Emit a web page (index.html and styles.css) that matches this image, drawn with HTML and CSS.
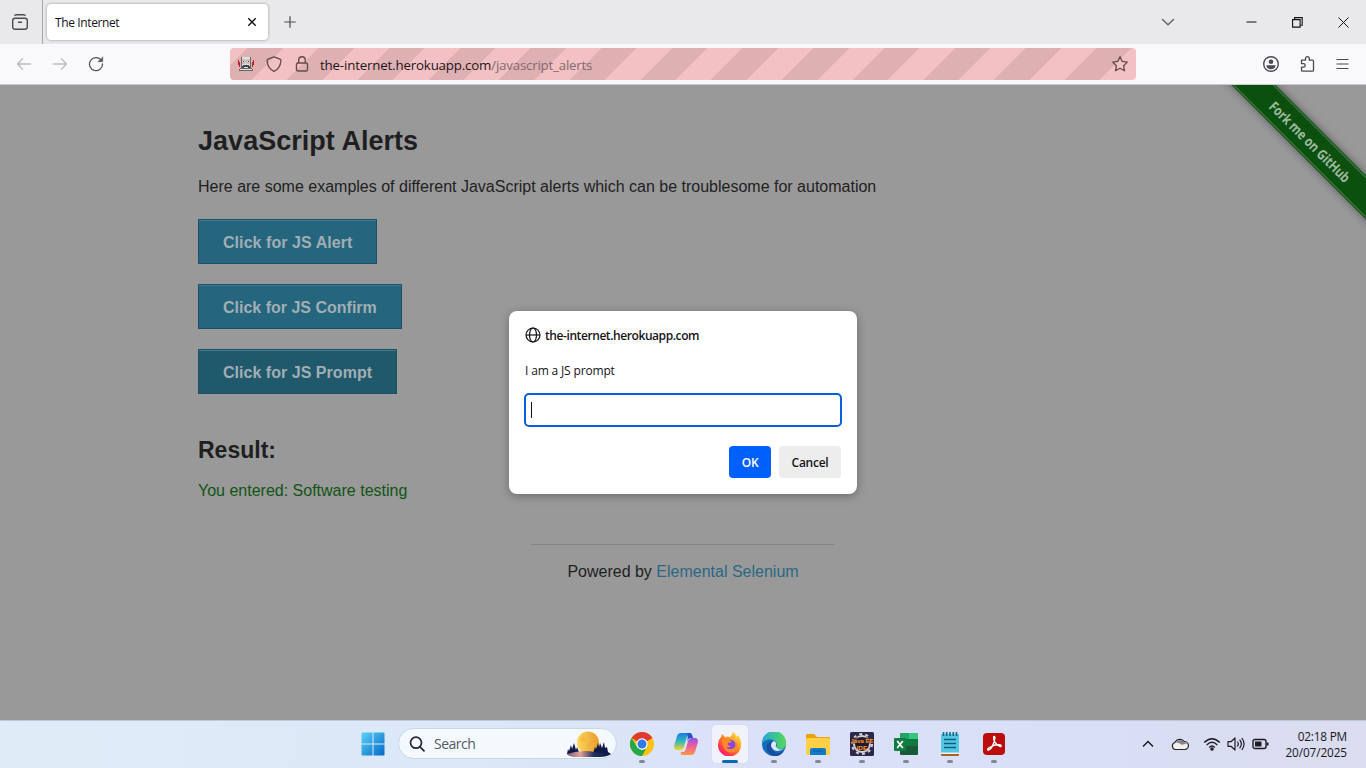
FILE: index.html
```html
<!DOCTYPE html>
<html lang="en">
<head>
<meta charset="utf-8">
<title>The Internet</title>
<link rel="stylesheet" href="styles.css">
</head>
<body>
<div class="screen">
  <header class="tabbar">
    <div class="recent"><svg width="18" height="18" viewBox="0 0 18 18" fill="none" stroke="#4a4a52" stroke-width="1.4" stroke-linecap="round"><rect x="1.7" y="5.2" width="14.6" height="11" rx="2.4"/><path d="M3.8 2.2Q4.5 1.7 5.5 1.7H12.5Q13.5 1.7 14.2 2.2M7.5 9.2h3"/></svg></div>
    <div class="tab"><span class="tab-title">The Internet</span><svg width="10" height="10" viewBox="0 0 10 10" stroke="#15141a" stroke-width="1.4"><path d="M1.3 1.3l7.4 7.4M8.7 1.3L1.3 8.7"/></svg></div>
    <svg class="plus" width="12" height="12" viewBox="0 0 12 12" stroke="#4a4a52" stroke-width="1.2"><path d="M6 .3v11.4M.3 6h11.4"/></svg>
    <div class="window-controls">
      <svg width="14" height="14" viewBox="0 0 14 14" fill="none" stroke="#5b5b66" stroke-width="1.3" stroke-linecap="round" stroke-linejoin="round"><path d="M1.5 4.5L7 9.7l5.500-5.200"/></svg>
      <svg class="minimize" width="11" height="11" viewBox="0 0 11 11" stroke="#111"><path d="M.5 5h10"/></svg>
      <svg class="restore" width="11" height="11" viewBox="0 0 11 11" fill="none" stroke="#111" stroke-width="1.1"><path d="M.6 2.600h7.500v7.500H.6zM2.600 2.500V.6h7.600v7.600H8.200"/></svg>
      <svg class="close" width="11" height="11" viewBox="0 0 11 11" stroke="#111"><path d="M.5.5l10 10M10.500.5l-10 10"/></svg>
    </div>
  </header>
  <nav class="toolbar">
    <div class="nav-buttons">
      <svg width="16" height="16" viewBox="0 0 16 16" fill="none" stroke="#bcbcc1" stroke-width="1.3" stroke-linecap="round" stroke-linejoin="round"><path d="M14.500 8H1.500M6.500 2.800L1.500 8l5 5.200"/></svg>
      <svg width="16" height="16" viewBox="0 0 16 16" fill="none" stroke="#bcbcc1" stroke-width="1.3" stroke-linecap="round" stroke-linejoin="round"><path d="M1.500 8h13M9.500 2.800l5 5.200-5 5.200"/></svg>
      <svg width="16" height="16" viewBox="0 0 16 16" fill="none" stroke="#55555d" stroke-width="1.3" stroke-linecap="round"><path d="M12.900 3.900A6.500 6.500 0 1 0 14.500 8"/><path d="M14.700 1.200v4.500h-4.500z" fill="#55555d" stroke-width=".6"/></svg>
    </div>
    <div class="urlbar">
      <svg class="robot" width="16" height="16" viewBox="0 0 16 16"><path d="M0 4h1v2h1v5H1V9H0zM15 4h1v5h-1v2h-1V6h1z" fill="#bd1e2c"/><path d="M3 1h10v11h1v1h1v2H1v-2h1v-1h1z" fill="#656a6d"/><path d="M4 1h8v11H4zM2 13h12v1H2z" fill="#dce0df"/><path d="M4 4h3v3H4zM9 4h3v3H9z" fill="#fff" stroke="#8b6f65" stroke-width=".6"/><path d="M5 5h1v1H5zM10 5h1v1h-1z" fill="#a51c1c"/><path d="M5 9h6v1h1v2h-2v-1H6v1H4v-2h1z" fill="#434547"/></svg>
      <svg class="shield" width="16" height="16" viewBox="0 0 16 16" fill="none" stroke="#634b50" stroke-width="1.3" stroke-linejoin="round"><path d="M8 .9L14 3.100q1 .4.900 1.600C14.500 9.700 12 13.500 8 15.300 4 13.500 1.500 9.700 1.100 4.700 1 3.500 1.500 3.200 2 3.100z"/></svg>
      <svg class="lock" width="14" height="16" viewBox="0 0 14 16" fill="none" stroke="#634b50" stroke-width="1.4"><rect x="1.500" y="7" width="11" height="8" rx="1.500"/><path d="M3.700 7V4a3.300 3.300 0 0 1 6.600 0v3"/></svg>
      <span class="url"><span class="host">the-internet.herokuapp.com</span><span class="path">/javascript_alerts</span></span>
      <svg class="star" width="18" height="18" viewBox="0 0 18 18" fill="none" stroke="#634b50" stroke-width="1.3" stroke-linejoin="round"><path d="M9 1.700l2.200 4.700 5.100.7-3.700 3.600.9 5.100L9 13.300l-4.500 2.500.9-5.100L1.700 7.100l5.100-.7z"/></svg>
    </div>
    <div class="tools">
      <svg width="18" height="18" viewBox="0 0 18 18" fill="#4a4a52"><circle cx="9" cy="9" r="7.300" fill="none" stroke="#4a4a52" stroke-width="1.400"/><circle cx="9" cy="6.700" r="2.300"/><path d="M4.500 10.300h9q.3 2-1.700 3.200-2.800 1.500-5.600 0-2-1.200-1.700-3.200z"/></svg>
      <svg width="16" height="18" viewBox="0 0 16 18" fill="none" stroke="#4a4a52" stroke-width="1.300" stroke-linejoin="round"><path d="M1.500 5.200h4V3.500a1.900 1.900 0 0 1 3.800 0v1.700H12.500q1 0 1 1v9q0 1-1 1H2.500q-1 0-1-1v-3.100h2a1.700 1.700 0 0 0 0-3.400H1.500z"/></svg>
      <svg width="13" height="12" viewBox="0 0 13 12" stroke="#4a4a52" stroke-width="1.200"><path d="M.5 1.500h12M.5 6h12M.5 10.500h12"/></svg>
    </div>
  </nav>
  <main class="page">
    <div class="ribbon"><span>Fork me on GitHub</span></div>
    <section class="example">
      <h3>JavaScript Alerts</h3>
      <p>Here are some examples of different JavaScript alerts which can be troublesome for automation</p>
      <ul>
        <li><button class="js-button alert">Click for JS Alert</button></li>
        <li><button class="js-button confirm">Click for JS Confirm</button></li>
        <li><button class="js-button prompt hovered">Click for JS Prompt</button></li>
      </ul>
      <h4>Result:</h4>
      <p class="result">You entered: Software testing</p>
    </section>
    <footer class="page-footer"><hr><div>Powered by <a>Elemental Selenium</a></div></footer>
    <div class="dialog">
      <div class="origin"><svg width="16" height="16" viewBox="0 0 16 16" fill="none" stroke="#15141a" stroke-width="1.200"><circle cx="8" cy="8" r="7"/><ellipse cx="8" cy="8" rx="3.500" ry="7"/><path d="M1 8h14"/></svg><span>the-internet.herokuapp.com</span></div>
      <div class="message">I am a JS prompt</div>
      <div class="field"><i class="caret"></i></div>
      <div class="actions"><button class="ok">OK</button><button class="cancel">Cancel</button></div>
    </div>
  </main>
  <footer class="taskbar">
    <div class="apps">
      <svg class="start" width="24" height="24" viewBox="0 0 24 24"><defs><linearGradient id="win" x1="0" y1="0" x2="24" y2="24" gradientUnits="userSpaceOnUse"><stop stop-color="#5fd3fa"/><stop offset="1" stop-color="#0067c5"/></linearGradient></defs><path fill="url(#win)" d="M1.500.5h10v11H.5v-10q0-1 1-1zM12.500.5h10q1 0 1 1v10h-11zM.5 12.500h11v11h-10q-1 0-1-1zM12.500 12.500h11v10q0 1-1 1h-10z"/></svg>
      <div class="search">
        <svg width="16" height="16" viewBox="0 0 16 16" fill="none" stroke="#24272d" stroke-width="1.700" stroke-linecap="round"><circle cx="7" cy="6.700" r="5.500"/><path d="M11 10.800l4 4"/></svg>
        <span>Search</span>
        <svg class="moon" width="46" height="28" viewBox="0 0 46 28"><defs><linearGradient id="moon"><stop stop-color="#ffd65a"/><stop offset="1" stop-color="#e89b2b"/></linearGradient><linearGradient id="hill"><stop stop-color="#765b76"/><stop offset=".3" stop-color="#e5a295"/><stop offset=".6" stop-color="#243263"/><stop offset="1" stop-color="#0c1743"/></linearGradient></defs><circle cx="22" cy="12.500" r="11" fill="url(#moon)"/><circle cx="17" cy="9" r="2.500" fill="#f4ba3c"/><circle cx="25" cy="15" r="3" fill="#eeb040"/><path fill="#101a48" d="M1 24l1-5 1 2 2-6 1 4 2-6 2 7 1-3 2 5 3 3zM27 23l2-6 1 2 2-6 1 4 1-4 2 5 2-6 1 6 2-1 1 5 3 2-17 2z"/><path d="M1 24Q17 19 30 22.500L45 24Q41 27 34 27H8Q2 26 1 24z" fill="url(#hill)"/></svg>
      </div>
      <div class="app chrome"><svg width="24" height="24" viewBox="0 0 24 24"><circle cx="12" cy="12" r="12" fill="#fbc116"/><path d="M12 12L1.600 6a12 12 0 0 1 20.800 0z" fill="#df3a30"/><path d="M12 24A12 12 0 0 1 1.600 6L7 15l5 3 4-1z" fill="#24a64b"/><circle cx="12" cy="12" r="5.700" fill="#fff"/><circle cx="12" cy="12" r="4.500" fill="#2f78ed"/></svg></div>
      <div class="app idle"><svg width="24" height="24" viewBox="0 0 24 24"><defs><linearGradient id="coA" x1="0" y1="0" x2="0" y2="1"><stop stop-color="#147ee8"/><stop offset=".5" stop-color="#36b8bb"/><stop offset="1" stop-color="#f6d528"/></linearGradient><linearGradient id="coB" x1="0" y1="0" x2="0" y2="1"><stop stop-color="#8e52e9"/><stop offset=".5" stop-color="#ef609b"/><stop offset="1" stop-color="#ff963c"/></linearGradient></defs><path fill="url(#coA)" d="M7 1h8q3 0 2 3h-2q-2 0-2.500 2L10 15q-1 3-4 3H3q-3 0-3-4L3 4q1-3 4-3z"/><path fill="url(#coB)" d="M17 23H9q-3 0-2-3h2q2 0 2.500-2L14 9q1-3 4-3h3q3 0 3 4l-3 10q-1 3-4 3z"/><path d="M13 1h3q2 0 3 5h-2q-3 0-4 4l1-6z" fill="#2455c5"/></svg></div>
      <div class="app active"><svg width="24" height="24" viewBox="0 0 24 24"><defs><linearGradient id="fox" x1="1" y1="0" x2=".2" y2="1"><stop stop-color="#fff14a"/><stop offset=".45" stop-color="#ff971f"/><stop offset=".8" stop-color="#ff3b4c"/><stop offset="1" stop-color="#e31587"/></linearGradient></defs><path fill="url(#fox)" d="M3 5l1-3 3 3q3-1 5 0 2-1 3-5 3 2 4 5l1-2q4 5 3 11A11.500 11.500 0 0 1 0 12q0-4 3-7z"/><circle cx="12" cy="13" r="5.500" fill="#8547df"/><path d="M4 8l7-2q-1 2 3 3-1 2-4 2-1 3 3 3-2 2-5 1 3 4 8 1 3-2 1-7 4 4 2 8-3 5-9 3-6-3-6-12z" fill="#ff8927"/></svg></div>
      <div class="app"><svg width="24" height="24" viewBox="0 0 24 24"><defs><linearGradient id="edge"><stop stop-color="#22a7dc"/><stop offset="1" stop-color="#57d955"/></linearGradient></defs><circle cx="12" cy="12" r="12" fill="#126dbd"/><path d="M0 11A12 12 0 0 1 24 11q0 6-6 6-4 0-4-2 2-2 0-5Q8 4 0 11z" fill="url(#edge)"/><path d="M9 12q-1 7 6 9 4 0 7-2-4 6-11 5Q3 20 5 13q2-4 7-4-2 1-3 3z" fill="#164f9f"/><path d="M12 9q-3 1-3 5 2 5 7 5 4 0 7-3-5 3-8 0-2-1-1-3 1-2-2-4z" fill="#e2e7fa"/></svg></div>
      <div class="app"><svg width="26" height="24" viewBox="0 0 26 24"><path d="M1 3q0-1 1-1h7l3 3h12q1 0 1 1v8H1z" fill="#e8a30d"/><rect x="1" y="6" width="24" height="17" rx="1.500" fill="#ffcf46"/><path d="M5 23v-5q0-2 2-2h12q2 0 2 2v5z" fill="#147ac8"/><path d="M8 19h10" stroke="#095a9d"/></svg></div>
      <div class="app"><svg width="24" height="24" viewBox="0 0 24 24"><rect width="24" height="24" rx="1.500" fill="#2c274c"/><circle cx="12" cy="12" r="8" fill="#211a2e" stroke="#d8d0d3" stroke-width="2"/><circle cx="12" cy="12" r="10" fill="none" stroke="#d8d0d3" stroke-width="2" stroke-dasharray="3 3.280"/><path d="M0 5.500h24v6H0z" fill="#2c1f2e" opacity=".75"/><g fill="#ff9427" font-family="Liberation Sans, sans-serif" font-size="6" font-weight="bold" text-anchor="middle"><text x="12" y="10.500" textLength="23" lengthAdjust="spacingAndGlyphs">Java EE</text><text x="12" y="17.800" textLength="11" lengthAdjust="spacingAndGlyphs">IDE</text></g></svg></div>
      <div class="app"><svg width="24" height="24" viewBox="0 0 24 24"><path fill="#20a365" d="M6 1h17q1 0 1 1v10H6z"/><path fill="#107c41" d="M6 7h9v15H6z"/><path fill="#35c481" d="M15 1h8q1 0 1 1v5h-9z"/><path fill="#185c37" d="M6 14h18v8q0 1-1 1H7q-1 0-1-1z"/><path fill="#10793e" d="M15 7h9v7h-9z"/><rect y="6" width="12" height="13" rx="1" fill="#107c41"/><path d="M3.200 9l5.600 7M8.800 9l-5.600 7" stroke="#fff" stroke-width="1.700"/></svg></div>
      <div class="app"><svg width="20" height="24" viewBox="0 0 20 24"><path d="M1 21h18v2q0 1-1 1H2q-1 0-1-1z" fill="#af5f24"/><rect x="1" y="2" width="18" height="20" rx="1" fill="#53c7e1"/><path d="M1 20.500h18V22H1z" fill="#e9f5fa"/><path d="M4 7.500h12M4 11.500h12M4 15.500h12" stroke="#075d82" stroke-width="1.300"/><path d="M3.500 0v4M6.700 0v4M10 0v4M13.300 0v4M16.500 0v4" stroke="#126887" stroke-width="1.600"/></svg></div>
      <div class="app"><svg width="22" height="22" viewBox="0 0 22 22"><rect width="22" height="22" rx="4" fill="#bb0d0b"/><path d="M5 17c-2-1 4-4 7-5 3-.6 7-.3 6 1.200-1 1.200-6-2.700-7-5.700-.7-3-.3-4 .2-4 1.300 0 .5 4-1.100 8-1 3-3.600 6-5.100 5.500z" fill="none" stroke="#fff" stroke-width="1.400"/></svg></div>
    </div>
    <div class="tray">
      <svg width="12" height="12" viewBox="0 0 12 12" fill="none" stroke="#1c1c22" stroke-width="1.500"><path d="M1 8.500l5-5 5 5"/></svg>
      <svg class="cloud" width="18" height="14" viewBox="0 0 18 14"><path d="M4.500 12.500a3.600 3.600 0 0 1-.6-7A5.300 5.300 0 0 1 13 4.500a4 4 0 0 1 .8 8z" fill="#f3f0ed" stroke="#26262a" stroke-width="1.200"/><path d="M4.500 5.500A5.200 5.200 0 0 1 13 5q2 .3 3 2Q13 6.500 11 8 8 5 4.500 5.500z" fill="#85858b"/></svg>
      <svg class="wifi" width="18" height="14" viewBox="0 0 18 14" fill="none" stroke="#1c1c22" stroke-width="1.400"><path d="M1.200 5.500Q9-2 16.800 5.500M3.700 8Q9 2.700 14.300 8M6.200 10.400Q9 7.700 11.800 10.400"/><circle cx="9" cy="12" r="1.100" fill="#1c1c22"/></svg>
      <svg class="speaker" width="18" height="14" viewBox="0 0 18 14" fill="none" stroke="#1c1c22" stroke-width="1.200" stroke-linejoin="round"><path d="M1 4.700h3L8 1v12L4 9.300H1zM10.300 4.500q2 2.500 0 5M12.600 2.700q3.500 4.300 0 8.600M14.800 1q4.500 6 0 12"/></svg>
      <svg class="battery" width="17" height="12" viewBox="0 0 17 12" fill="none" stroke="#1c1c22" stroke-width="1.400"><rect x="1" y="1.500" width="13" height="9" rx="2"/><path d="M3 3.500h6.500v5H3z" fill="#1c1c22" stroke="none"/><path d="M15.500 4.500v3" stroke-width="2"/></svg>
      <div class="clock"><span>02:18 PM</span><span class="date">20/07/2025</span></div>
    </div>
  </footer>
</div>
</body>
</html>
```
FILE: styles.css
```css
* { box-sizing: border-box; }
body { margin: 0; font-family: "Open Sans", "Noto Sans", sans-serif; }
svg { display: block; flex-shrink: 0; }
button { border: 0; margin: 0; font-family: inherit; }
.screen { width: 1366px; height: 768px; display: flex; flex-direction: column; overflow: hidden; }

.tabbar { height: 44px; flex-shrink: 0; background: #e9e9eb; display: flex; align-items: center; }
.recent { width: 43px; height: 44px; display: flex; align-items: center; padding-left: 11px; border-right: 1px solid #a5a5aa; }
.tab { width: 221px; height: 36px; margin-left: 4px; padding: 0 11px 0 8px; background: #fff; border-radius: 4px; box-shadow: 0 0 3px rgba(0,0,0,.38); display: flex; align-items: center; justify-content: space-between; }
.tab-title { font-size: 12px; color: #15141a; letter-spacing: -.38px; }
.plus { margin-left: 16px; }
.window-controls { margin-left: auto; display: flex; align-items: center; padding-right: 17px; }
.minimize { margin-left: 71px; }
.restore, .close { margin-left: 35px; }

.toolbar { height: 41px; flex-shrink: 0; background: #f9f9fb; border-bottom: 1px solid #cbcbce; display: flex; align-items: center; }
.nav-buttons { width: 230px; display: flex; gap: 20px; padding-left: 16px; }
.urlbar { width: 906px; height: 32px; border-radius: 4px; display: flex; align-items: center; padding: 0 7px 0 8px; background: repeating-linear-gradient(135deg, #f3c1c3 0 12.7px, #deb0b2 12.7px 37.7px, #f3c1c3 37.7px 50px); }
.shield { margin-left: 12px; }
.lock { margin-left: 13px; }
.url { margin-left: 11px; padding-top: 2px; font-size: 13.3px; white-space: nowrap; }
.host { color: #1d1519; letter-spacing: -.17px; }
.path { color: #826a70; letter-spacing: -.2px; }
.star { margin-left: auto; }
.tools { flex: 1; display: flex; align-items: center; justify-content: flex-end; gap: 20px; padding-right: 17px; }

.page { flex: 1; position: relative; overflow: hidden; background: #99999a; font-family: "Liberation Sans", Arial, sans-serif; font-size: 16px; color: #1f1f21; }
.example { padding: 37px 0 0 198px; }
.example h3 { margin: 0; font-size: 27px; line-height: 38px; letter-spacing: .03px; }
.example p { margin: 14px 0 19px; line-height: 26px; }
.example ul { list-style: none; margin: 0; padding: 0; display: flex; flex-direction: column; gap: 20px; }
.example li { height: 45px; display: flex; }
.js-button { height: 45px; padding: 2px 0 0 24px; border: 1px solid #1b5166; background: #25657e; color: #a1aeb3; font-size: 16px; font-weight: bold; text-align: left; box-shadow: inset 0 1px 0 #43798d; }
.alert { width: 179px; letter-spacing: .06px; }
.confirm { width: 204px; }
.prompt { width: 199px; letter-spacing: .03px; }
.js-button.hovered { background: #20596c; border-color: #1c5164; }
.example h4 { margin: 40px 0 0; font-size: 23px; line-height: 32px; }
.example .result { margin: 12px 0 0; color: #0f5513; line-height: 26px; }
.page-footer { width: 304px; margin: 40px auto 0 531px; text-align: center; line-height: 24px; }
.page-footer hr { margin: 0 0 15px; border: 0; border-top: 1px solid #858586; }
.page-footer a { color: #2a6882; }

.ribbon { position: absolute; left: 1190px; top: 41px; width: 240px; height: 31px; transform: rotate(45deg); background: #0c500f; box-shadow: 0 0 8px rgba(30,20,40,.5); display: flex; align-items: center; justify-content: center; }
.ribbon::before { content: ""; position: absolute; inset: 1px 0; border-top: 1px solid #467e48; border-bottom: 1px solid #467e48; }
.ribbon span { color: #9dba9e; font: 700 14px "Open Sans", sans-serif; letter-spacing: -.2px; white-space: nowrap; transform: scaleX(.84); }

.dialog { position: absolute; left: 509px; top: 226px; width: 348px; height: 183px; padding: 16px; background: #fff; border-radius: 8px; box-shadow: 0 2px 10px rgba(0,0,0,.3); font-family: "Open Sans", sans-serif; font-size: 12px; color: #15141a; }
.origin { display: flex; align-items: center; gap: 4px; height: 18px; margin-top: -1px; font-weight: 600; letter-spacing: -.42px; }
.origin svg { margin-right: 0; }
.message { margin-top: 18px; height: 18px; line-height: 18px; letter-spacing: -.16px; }
.field { margin: 13px -1px 0; height: 34px; border: 2px solid #0560df; border-radius: 5px; padding: 7px 0 0 5px; }
.caret { display: block; width: 1px; height: 16px; background: #111; }
.actions { display: flex; justify-content: flex-end; gap: 8px; margin-top: 19px; }
.actions button { height: 32px; padding: 0; border-radius: 4px; font-size: 12px; font-weight: 600; letter-spacing: -.25px; }
.ok { width: 42px; background: #0060fb; color: #fff; }
.cancel { width: 62px; background: #ededee; color: #15141a; }

.taskbar { height: 48px; flex-shrink: 0; border-top: 1px solid #bfc7da; padding-bottom: 2px; background: linear-gradient(90deg, #dfecf7, #dae8f8 35%, #dbe1f8 55%, #d8dff7 75%, #dbdcef); display: flex; align-items: center; }
.apps { display: flex; align-items: center; padding-left: 361px; }
.search { width: 219px; height: 31px; margin: 0 3px 0 13px; padding: 0 4px 0 10px; border: 1px solid #cbd6e5; border-radius: 16px; background: #f4f9fe; display: flex; align-items: center; font-size: 14px; color: #565b63; }
.search span { margin-left: 9px; letter-spacing: -.5px; }
.moon { margin-left: auto; }
.app { position: relative; width: 44px; height: 45px; display: flex; align-items: center; justify-content: center; }
.app::after { content: ""; position: absolute; left: 19px; bottom: 3px; width: 6px; height: 3px; border-radius: 2px; background: #858894; }
.app.idle::after { display: none; }
.app.active { width: 36px; height: 38px; margin: 0 4px; background: #f1f2fc; border-radius: 4px; box-shadow: 0 0 1px #a8b3ce; }
.app.active::after { width: 16px; left: 10px; bottom: 0; background: #0869b5; }
.tray { flex: 1; display: flex; align-items: center; justify-content: flex-end; padding-right: 19px; }
.cloud { margin-left: 17px; }
.wifi { margin-left: 14px; }
.speaker { margin-left: 6px; }
.battery { margin-left: 7px; }
.clock { width: 64px; margin-left: 14px; display: flex; flex-direction: column; align-items: flex-end; font-size: 11.8px; line-height: 16px; color: #18181d; white-space: nowrap; letter-spacing: -.2px; }
.date { letter-spacing: -.1px; }
```
